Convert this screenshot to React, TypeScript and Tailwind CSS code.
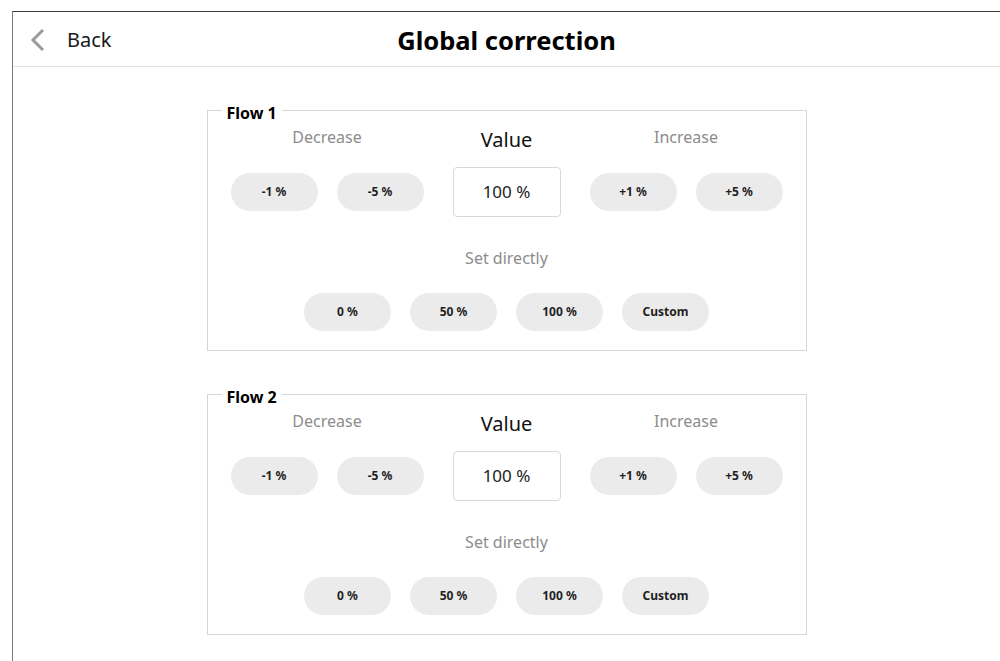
import React, { useState } from 'react';

const font = { fontFamily: '"Noto Sans", "Open Sans", sans-serif' };

const PillButton: React.FC<{ label: string; onClick?: () => void }> = ({ label, onClick }) => (
  <button
    onClick={onClick}
    className="h-[38px] w-[87px] rounded-full bg-[#ebebeb] text-[12px] font-bold text-[#1f1f1f] hover:bg-[#e0e0e0]"
  >
    {label}
  </button>
);

const FlowCard: React.FC<{ title: string }> = ({ title }) => {
  const [value, setValue] = useState(100);

  const step = (d: number) => setValue((v) => Math.max(0, Math.min(200, v + d)));

  return (
    <fieldset className="mx-auto w-[600px] border border-[#d6d6d6] pb-[19px]">
      <legend className="ml-[14px] px-[5px] pt-[6px] text-[16px] font-bold leading-[20px] text-black">
        {title}
      </legend>

      <div className="flex h-[44px] justify-center gap-[29px]">
        <div className="w-[193px] pt-[2px] text-center text-[16px] leading-[24px] text-[#8c8c8c]">Decrease</div>
        <div className="w-[108px] pt-[3px] text-center text-[20px] leading-[28px] text-[#111]">Value</div>
        <div className="w-[193px] pt-[2px] text-center text-[16px] leading-[24px] text-[#8c8c8c]">Increase</div>
      </div>

      <div className="flex items-center justify-center gap-[29px]">
        <div className="flex w-[193px] gap-[19px]">
          <PillButton label="-1 %" onClick={() => step(-1)} />
          <PillButton label="-5 %" onClick={() => step(-5)} />
        </div>
        <div className="flex h-[50px] w-[108px] items-center justify-center rounded-[4px] border border-[#d9d9d9] text-[17px] text-[#222]">
          {value} %
        </div>
        <div className="flex w-[193px] gap-[19px]">
          <PillButton label="+1 %" onClick={() => step(1)} />
          <PillButton label="+5 %" onClick={() => step(5)} />
        </div>
      </div>

      <div className="mt-[29px] text-center text-[16px] leading-[24px] text-[#8c8c8c]">Set directly</div>

      <div className="mt-[23px] flex justify-center gap-[19px]">
        <PillButton label="0 %" onClick={() => setValue(0)} />
        <PillButton label="50 %" onClick={() => setValue(50)} />
        <PillButton label="100 %" onClick={() => setValue(100)} />
        <PillButton label="Custom" />
      </div>
    </fieldset>
  );
};

export default function App() {
  return (
    <div className="h-screen bg-white pl-[12px] pt-[11px]" style={font}>
      <div className="flex h-full flex-col border-l border-t border-l-[#7a7a7a] border-t-[#3f3f3f]">
        {/* top bar */}
        <header className="relative flex h-[55px] shrink-0 items-center border-b border-[#e2e2e2]">
          <button className="flex items-center pl-[17px] pt-[2px] text-[20px] text-[#1a1a1a]">
            <svg width="16" height="24" viewBox="0 0 16 24" className="mr-[21px]">
              <polyline points="13,2 3,12 13,22" fill="none" stroke="#9a9a9a" strokeWidth="3" />
            </svg>
            Back
          </button>
          <h1 className="absolute left-1/2 top-[13px] -translate-x-1/2 text-[25.5px] font-bold leading-[30px] text-black">
            Global correction
          </h1>
        </header>

        <main className="flex flex-col gap-[30px] pt-[30px]">
          <FlowCard title="Flow 1" />
          <FlowCard title="Flow 2" />
        </main>
      </div>
    </div>
  );
}
